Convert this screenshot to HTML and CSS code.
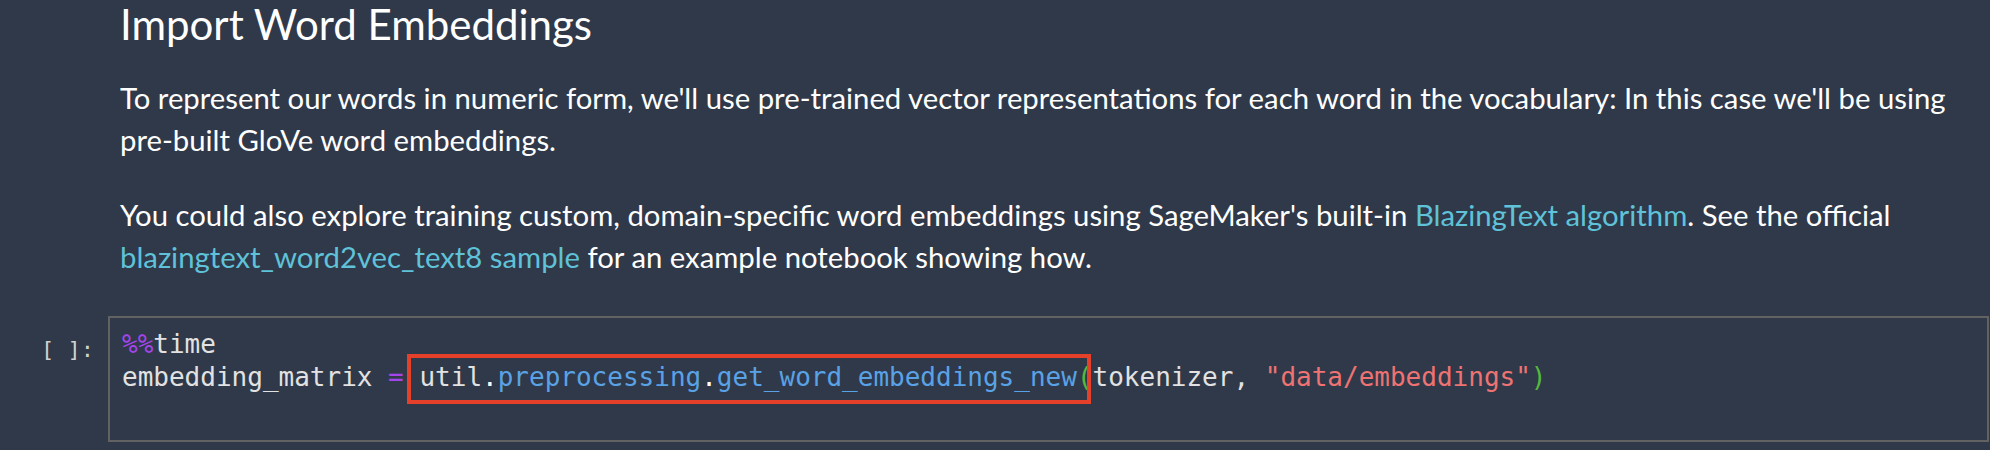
FILE: index.html
```html
<!DOCTYPE html>
<html>
<head>
<meta charset="utf-8">
<link rel="stylesheet" href="styles.css">
</head>
<body>
<div class="notebook">
  <div class="cell">
    <div class="prompt"></div>
    <div class="markdown">
      <h2 class="md-heading">Import Word Embeddings</h2>
      <p class="md-para">To represent our words in numeric form, we'll use pre-trained vector representations for each word in the vocabulary: In this case we'll be using <span class="nobr">pre-built</span> GloVe word embeddings.</p>
      <p class="md-para">You could also explore training custom, domain-specific word embeddings using SageMaker's built-in <a class="md-link" href="#">BlazingText algorithm</a>. See the official <a class="md-link" href="#">blazingtext_word2vec_text8 sample</a> for an example notebook showing how.</p>
    </div>
  </div>
  <div class="cell code-cell">
    <div class="prompt in-prompt">[&nbsp;]:</div>
    <div class="input-area">
      <pre class="code"><span class="tok-magic">%%</span>time
embedding_matrix <span class="tok-op">=</span> <span class="highlight">util<span class="tok-dot">.</span><span class="tok-attr">preprocessing</span><span class="tok-dot">.</span><span class="tok-attr">get_word_embeddings_new</span><span class="tok-paren">(</span></span>tokenizer, <span class="tok-str">"data/embeddings"</span><span class="tok-paren">)</span></pre>
    </div>
  </div>
</div>
</body>
</html>
```
FILE: styles.css
```css
html, body {
  margin: 0;
  padding: 0;
  background: #2f3949;
}

.notebook {
  width: 1990px;
  height: 450px;
  overflow: hidden;
  background: #2f3949;
  color: #ffffff;
  font-family: Lato, "Noto Sans", sans-serif;
}

.cell {
  display: flex;
}

.prompt {
  flex: none;
  width: 108px;
}

.markdown {
  flex: 1;
  padding-left: 12px;
  padding-right: 15px;
  min-width: 0;
}

.md-heading {
  margin: 0;
  font-size: 42px;
  line-height: 48px;
  font-weight: 400;
  color: #ffffff;
}

.md-para {
  margin: 29px 0 0 0;
  font-size: 29.3px;
  line-height: 42px;
  color: #ffffff;
}

.md-para + .md-para {
  margin-top: 33px;
}

.nobr {
  white-space: nowrap;
}

.md-link {
  color: #5fc2d8;
  text-decoration: none;
}

.code-cell {
  margin-top: 38px;
}

.in-prompt {
  padding-top: 17px;
  padding-right: 14px;
  box-sizing: border-box;
  text-align: right;
  font-family: "DejaVu Sans Mono", monospace;
  font-size: 22px;
  line-height: 33px;
  color: #d0d0d0;
}

.input-area {
  flex: 1;
  border: 2px solid #626262;
  margin-right: 1px;
  padding: 10px 12px 46px 12px;
  min-width: 0;
}

.code {
  margin: 0;
  font-family: "DejaVu Sans Mono", monospace;
  font-size: 26px;
  line-height: 33px;
  color: #e2e2e2;
  white-space: pre;
}

.tok-magic,
.tok-op {
  color: #a445ec;
}

.tok-attr {
  color: #5aa2e6;
}

.tok-dot {
  color: #ffffff;
}

.tok-paren {
  color: #55b83f;
}

.tok-str {
  color: #ee7372;
}

.highlight {
  position: relative;
}

.highlight::after {
  content: "";
  position: absolute;
  left: -12px;
  right: 2px;
  top: -8px;
  bottom: -12px;
  border: 4px solid #e5402a;
  pointer-events: none;
}
```
